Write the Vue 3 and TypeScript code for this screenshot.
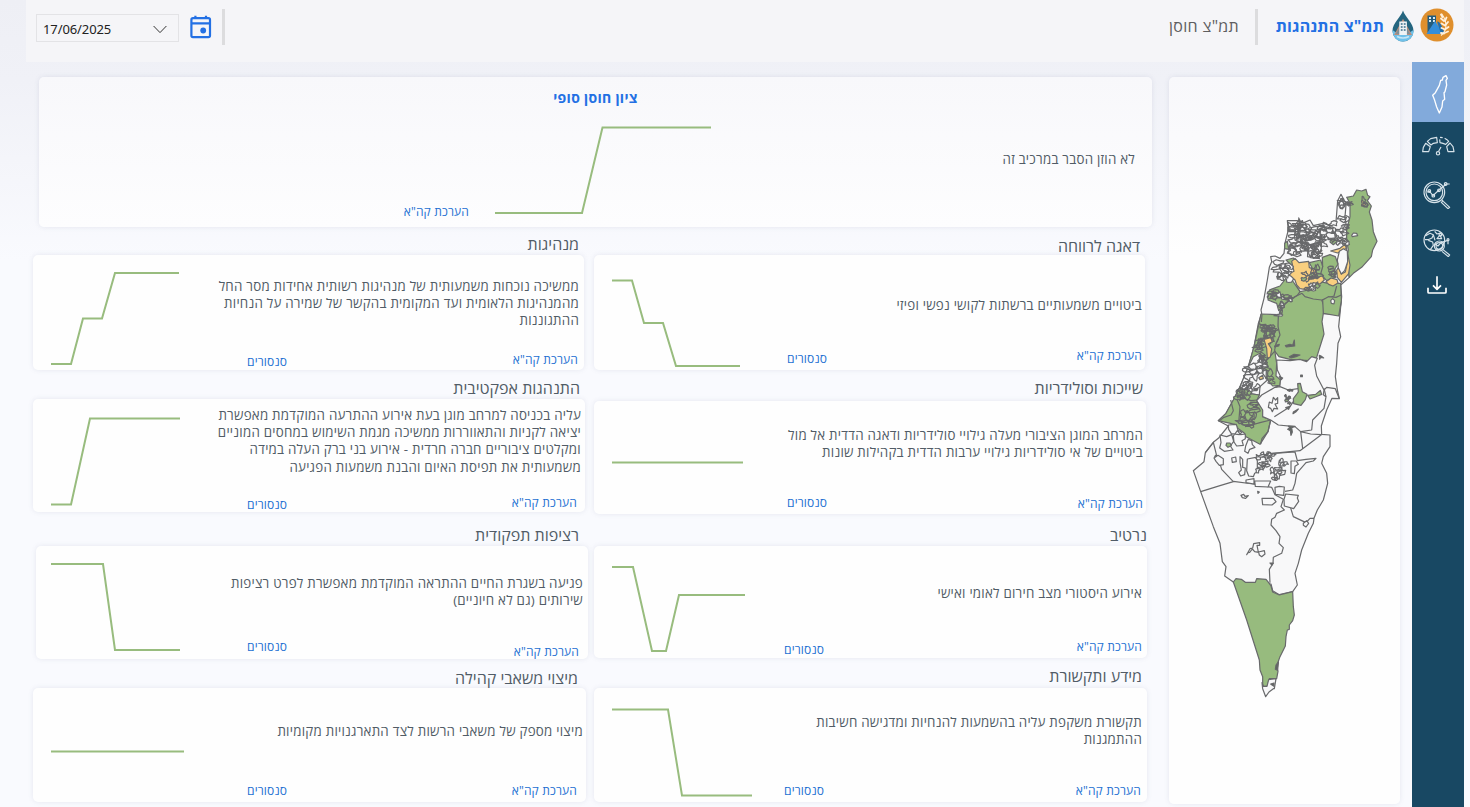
<script setup lang="ts">
interface Panel {
  id: string
  title: string
  lines: string[]
  chart: string
}

const left: Panel[] = [
  {
    id: 'leadership',
    title: 'מנהיגות',
    lines: [
      'ממשיכה נוכחות משמעותית של מנהיגות רשותית אחידות מסר החל',
      'מהמנהיגות הלאומית ועד המקומית בהקשר של שמירה על הנחיות',
      'ההתגוננות',
    ],
    chart: '18,109 38,109 50,63.5 69,63.5 82,18 146,18',
  },
  {
    id: 'behavior',
    title: 'התנהגות אפקטיבית',
    lines: [
      'עליה בכניסה למרחב מוגן בעת אירוע ההתרעה המוקדמת מאפשרת',
      'יציאה לקניות והתאווררות ממשיכה מגמת השימוש במחסים המוניים',
      'ומקלטים ציבוריים חברה חרדית - אירוע בני ברק העלה במידה',
      'משמעותית את תפיסת האיום והבנת משמעות הפגיעה',
    ],
    chart: '18,105.5 38,105.5 57,19.5 147,19.5',
  },
  {
    id: 'continuity',
    title: 'רציפות תפקודית',
    lines: ['פגיעה בשגרת החיים ההתראה המוקדמת מאפשרת לפרט רציפות', 'שירותים (גם לא חיוניים)'],
    chart: '15,18 67,18 79,104 144,104',
  },
  {
    id: 'resources',
    title: 'מיצוי משאבי קהילה',
    lines: ['מיצוי מספק של משאבי הרשות לצד התארגנויות מקומיות'],
    chart: '18,63.5 151,63.5',
  },
]

const right: Panel[] = [
  {
    id: 'welfare',
    title: 'דאגה לרווחה',
    lines: ['ביטויים משמעותיים ברשתות לקושי נפשי ופיזי'],
    chart: '18,25.5 38,25.5 50,68 69,68 82,111 146,111',
  },
  {
    id: 'belonging',
    title: 'שייכות וסולידריות',
    lines: [
      'המרחב המוגן הציבורי מעלה גילויי סולידריות ודאגה הדדית אל מול',
      'ביטויים של אי סולידריות גילויי ערבות הדדית בקהילות שונות',
    ],
    chart: '18,61.5 149,61.5',
  },
  {
    id: 'narrative',
    title: 'נרטיב',
    lines: ['אירוע היסטורי מצב חירום לאומי ואישי'],
    chart: '18,21 39,21 58,105 72,105 85,49 151,49',
  },
  {
    id: 'media',
    title: 'מידע ותקשורת',
    lines: ['תקשורת משקפת עליה בהשמעות להנחיות ומדגישה חשיבות', 'ההתמגנות'],
    chart: '18,21.5 74,21.5 88,107.5 158,107.5',
  },
]

const columns = [left, right]

/* Small municipal areas: centre x, centre y, spread x, spread y, count, size, fill classes */
type Cluster = [number, number, number, number, number, number, string[]]

const clusters: Cluster[] = [
  [350, 165, 26, 34, 16, 13, ['w', 'l', 'l']],
  [398, 178, 36, 40, 30, 14, ['w', 'l', 'l']],
  [450, 165, 26, 34, 13, 11, ['w', 'l', 'l']],
  [372, 212, 46, 16, 20, 13, ['w', 'l']],
  [488, 150, 12, 46, 13, 9, ['w', 'l']],
  [484, 70, 5, 10, 4, 10, ['w', 'l']],
  [505, 68, 7, 6, 3, 7, ['l']],
  [550, 68, 6, 9, 4, 8, ['l', 'y', 'g']],
  [308, 272, 18, 26, 12, 13, ['w', 'l', 'w']],
  [395, 280, 28, 18, 12, 8, ['l', 'g', 'l']],
  [395, 322, 18, 8, 7, 8, ['w', 'l']],
  [452, 280, 16, 20, 5, 8, ['l']],
  [276, 342, 14, 16, 7, 8, ['l', 'g']],
  [312, 352, 28, 8, 11, 7, ['w', 'l', 'g']],
  [300, 392, 6, 24, 5, 7, ['l', 'w']],
  [272, 462, 18, 24, 18, 9, ['g', 'l', 'l']],
  [240, 500, 10, 16, 6, 9, ['g', 'l']],
  [242, 545, 14, 22, 12, 9, ['w', 'l']],
  [216, 575, 16, 28, 8, 12, ['w', 'l']],
  [214, 620, 22, 12, 10, 9, ['w', 'l']],
  [190, 640, 16, 18, 9, 9, ['g', 'l']],
  [272, 590, 10, 24, 4, 9, ['g', 'l']],
  [205, 705, 20, 34, 15, 11, ['l', 'g', 'l']],
  [245, 848, 14, 24, 11, 8, ['w', 'l']],
  [268, 828, 14, 8, 6, 6, ['w', 'l']],
  [310, 850, 10, 8, 4, 7, ['w']],
  [282, 880, 20, 18, 6, 8, ['w', 'l']],
  [324, 648, 8, 26, 7, 4, ['g', 'k']],
]

function noise(n: number): number {
  const v = Math.sin(n * 127.1 + 11.7) * 43758.5453
  return v - Math.floor(v)
}

const areas = clusters.flatMap(([cx, cy, sx, sy, count, size, fills], c) =>
  Array.from({ length: count }, (_, i) => {
    const seed = c * 997 + i * 31
    const x = cx + (noise(seed) * 2 - 1) * sx
    const y = cy + (noise(seed + 1) * 2 - 1) * sy
    const wide = 0.7 + noise(seed + 20) * 0.9
    const points = Array.from({ length: 9 }, (_, k) => {
      const a = (k / 9) * Math.PI * 2
      const r = size * (0.3 + noise(seed + 2 + k) * 1.05)
      return `${(x + Math.cos(a) * r * wide).toFixed(1)},${(y + (Math.sin(a) * r) / wide).toFixed(1)}`
    }).join(' ')
    return { points, fill: fills[i % fills.length] }
  }),
)
</script>

<template>
  <div class="app">
    <header class="topbar">
      <div class="datebox">
        <span class="date">17/06/2025</span>
        <svg class="chev" viewBox="0 0 14 9"><path d="M.6 1 7 7.6 13.4 1" /></svg>
      </div>
      <svg class="cal" viewBox="0 0 22 24">
        <rect x="1.4" y="3.2" width="18.6" height="19" rx="1.6" />
        <path d="M1 8.3h19M5.4 .8v3M16 .8v3" />
        <circle cx="13.2" cy="15.5" r="2.9" />
      </svg>
      <i class="divider first"></i>
      <span class="tab" dir="rtl">תמ"צ חוסן</span>
      <i class="divider second"></i>
      <span class="tab active" dir="rtl">תמ"צ התנהגות</span>
      <svg class="drop" viewBox="0 0 22 32">
        <path d="M11 .5C13 7 21.5 13 21.5 21a10.500 10.500 0 0 1-21 0C.5 13 9 7 11 .5Z" fill="#24657f" />
        <path d="M.6 20c6 5 14 5 20.800 0 .8 7-5 11.500-10.400 11.500S.4 27 .6 20Z" fill="#6fc1ea" />
        <path d="M3 24.500 11 10l8 14.500Z" fill="#7d8f97" stroke="#b98e7c" stroke-width="1.200" />
        <path d="M7.300 11.500h7.600V25H7.300z" fill="#eef3f5" />
        <path d="M8.800 14h1.800m1.200 0h1.800M8.800 17h1.800m1.200 0h1.800M8.800 20h1.800m1.200 0h1.800" stroke="#376d88" stroke-width="1.500" />
        <path d="M5 26.500c4 2 8 2 12 0" stroke="#c5e5f5" stroke-width="1.600" />
      </svg>
      <svg class="badge" viewBox="0 0 34 34">
        <circle cx="17" cy="17" r="16.500" fill="#df8f2d" />
        <path d="M7.500 7.500h8.500v17h-8.500z" fill="#245c7c" />
        <path d="M9 10h2m2 0h2M9 13h2m2 0h2" stroke="#d9e9f1" stroke-width="1.800" />
        <path d="m6.500 26 8.500-13 8.500 13Z" fill="#338edb" />
        <path d="M17 13.500c4 0 5 6 8 12.500h-4z" fill="#216fae" />
        <path d="M21 27.500c6-5 7-13 .5-22" stroke="#fff0dc" stroke-width="1.100" />
        <path d="m22.500 9-1.500-2.500m3 6.500-3-2.500m4 7-3.500-2m3.500 6-3.500-1.500m2.500 5.500-3-.5m4-12 1.500-3.500m-1 7.500 2.500-3m-2.500 7 3-2m-4 6 3.500-1.500" stroke="#fff0dc" stroke-width="1.900" stroke-linecap="round" />
      </svg>
    </header>

    <main class="body">
      <div class="content">
        <section class="hero">
          <h1 dir="rtl">ציון חוסן סופי</h1>
          <div class="hero-row">
            <a class="link" dir="rtl">הערכת קה"א</a>
            <svg class="hero-chart" viewBox="0 0 220 90"><polyline points="0,87 87,87 107.500,1.500 216,1.500" /></svg>
            <p dir="rtl">לא הוזן הסבר במרכיב זה</p>
          </div>
        </section>
        <div class="columns">
          <div v-for="(column, c) in columns" :key="c" class="column">
            <section v-for="panel in column" :key="panel.id" class="panel" :class="panel.id">
              <h2 dir="rtl">{{ panel.title }}</h2>
              <div class="card">
                <svg class="chart" viewBox="0 0 180 112"><polyline :points="panel.chart" /></svg>
                <div class="desc" dir="rtl">
                  <span v-for="line in panel.lines" :key="line">{{ line }}</span>
                </div>
                <a class="link sensors" dir="rtl">סנסורים</a>
                <a class="link rating" dir="rtl">הערכת קה"א</a>
              </div>
            </section>
          </div>
        </div>
      </div>

      <section class="mapcard">
        <svg class="map" viewBox="0 0 660 1590">
          <path class="w" d="M322 122 325 150 316 185 312 220 300 235 285 228 272 230 275 245 268 262 262 300 252 355 243 390 245 400 235 430 222 500 205 560 180 620 160 660 138 700 115 722 145 738 115 775 100 787 76 818 72 845 40 872 62 935 100 1040 120 1090 127 1145 138 1160 134 1188 160 1206 273 1212 278 1232 298 1244 338 1235 352 1215 345 1180 355 1150 365 1110 385 1060 400 1030 402 1015 412 990 430 960 443 910 440 880 425 850 430 830 450 800 450 765 425 763 424 738 440 690 456 655 478 656 472 630 466 590 470 550 474 490 482 470 476 440 480 400 485 350 482 315 508 292 500 240 500 150 495 110 498 75 492 60 483 43 473 62 470 100 468 125 445 135 430 130 400 137 390 120 372 128 350 122Z" />
          <path class="g" d="M510 70 500 52 520 48 530 30 545 33 558 28 563 46 570 50 562 62 574 78 568 96 576 120 580 155 591 184 578 210 574 230 545 262 520 280 508 292 500 240 505 210 500 180 500 150 510 110Z" />
          <path class="w" d="m515 166 5-7 10 1 3 7-16 3Z" />
          <path class="g" d="m452 172 14-4 6 16-12 10-10-8ZM314 190l8-6 4 24-12-2Z" />
          <path class="y" d="m452 213 28-8 15-12 4 12-14 8-12 6ZM503 222l7 33-4 26-22 26-12-15-2-22 6-8 8 20 12-6 5-24Z" />
          <path class="w" d="M478 214 490 206 502 213 503 245 494 272 484 282 475 264 472 240Z" />
          <path class="g" d="M427 232 450 224 466 230 474 252 463 270 466 292 440 302 420 280 428 260Z" />
          <path class="g" d="M318 240 340 234 350 246 335 256ZM388 248l34-8 6 20-6 22-18-4Z" />
          <path class="g" d="M300 330 320 300 350 320 360 335 385 330 420 305 445 310 482 310 484 360 478 405 430 400 426 425 432 462 410 532 385 542 330 538 297 530 280 508 295 478 292 420 310 370Z" />
          <path class="g" d="M268 330 300 318 322 290 336 300 360 335 352 346 318 368 296 392 290 370 264 360Z" />
          <path class="y" d="M335 244 345 235 357 248 386 244 388 263 405 267 410 285 425 282 433 300 420 312 400 308 385 330 360 326 350 315 345 300 325 283 342 274Z" />
          <path class="y" d="m438 305 15-11 18 5 3 10-15 9-13-5Z" />
          <path class="l" d="M366 340 375 350 400 357 425 360 462 348 470 318M425 360 431 375 431 400M296 392 330 358 366 340" />
          <path class="g" d="M428 360 445 350 468 352 484 345 484 362 476 408 430 400Z" />
          <path class="w" d="m452 362 6-6 6 6-2 10-8-2Z" />
          <path class="g" d="M243 402 295 404 294 440 300 465 288 490 284 510 290 550 288 588 302 600 300 616 278 618 262 598 258 540 205 560 222 500Z" />
          <path class="w" d="M258 545 248 580 262 600 240 620 238 645 205 640 180 620 205 560 220 530 240 520Z" />
          <path class="l" d="M222 500 246 504 262 498M235 430l22 10 6 20-14 18-24 4M246 404l-2 22M258 598l2-58 24-26" />
          <path class="g" d="M180 620 205 640 238 645 230 662 248 685 248 710 272 720 264 755 240 793 198 770 192 758 175 746 165 733 115 722 138 700 160 660Z" />
          <path class="l" d="M152 660 160 692 153 705 132 712 120 721M272 720 240 728 215 735 195 740M180 622l10 30 22 10 20-2M168 650l12 30-4 50" />
          <path class="w" d="M290 540 330 542 360 538 380 545 395 530 412 535 404 556 410 588 432 630 430 644 438 650 432 685 398 720 395 750 362 755 345 740 295 735 272 720 248 710 248 690 230 662 245 645 285 622 300 616 302 590 292 570Z" />
          <path class="l" d="M283 710 330 680 350 650 360 625 325 630 300 620 285 622M432 625 438 650M432 630 440 622 466 626 478 656M272 720 264 755 246 775 242 792M362 755 368 806 360 812 258 822M368 806 424 764 392 762 362 755" />
          <path class="g" d="m340 656 15-20-2-25 8-1 6 25 14 8-5 16-13 17-22-5Z" />
          <path class="g" d="m383 646 24-3 14-12 4 12-12 5-23 9Z" />
          <path class="w" d="m268 666 8 4 4-18 7 8 6-7v17l-8 2 8 15-11-2-5 10-5-10-7-3Z" />
          <path class="k" d="m285 497 13-4-2 5-12 3ZM316 497l14-4 8 3 5-16 1 18-25 3ZM328 530l14-7 18 2-12 5-15 4ZM418 526l5 2 8 6-9-2-3 6ZM298 590l10 4-4 5ZM362 585h5v5h-5ZM340 696l15-9-8 9-8 5ZM325 738l20 1-10 4 2 13-4 10-2-14-8-4 6-4Z" />
          <path class="k" d="m319 655 12-2-6 7ZM317 683l13-4-4 9ZM270 1149h10l-4 6ZM278 1448l6-4M288 1455l7-9-3 25-6-3Z" />
          <path class="l" d="M76 818 100 787 112 835 118 845 125 868 160 905 120 917 62 935M160 904 220 912 275 922 285 944 310 958 303 980 313 990 290 1000 285 1012 275 1018 273 1035 288 1052 300 1070 297 1090 310 1103 305 1120 280 1132 279 1150 268 1168 270 1208M258 822 345 816 352 842 378 838 408 835 400 843 378 848 350 880 345 910 338 930 315 934M332 984 340 1010 378 1028 390 1015 402 1015M112 835l-8-6 6-6" />
          <path class="w" d="m120 765 20 5 15-6 6 20-10 14 8 12-26 4-14-10 4-16ZM160 768l12-16 10 12 14-2v14l-10 6 4 14-20 2-8-12ZM145 735l24-2 5 18 12 5-8 8-24-3-8-13ZM197 798l8-20 10 4 2 12 8 8-16 6-5 12-10-6ZM102 834l12-8 16 10v18l-12 2-10-12ZM155 834l12-3 2 14-12 2ZM180 830l8 8v24l8 2-2 20-12 4-6-10 8-8-4-24Z" />
          <path class="g" d="m140 789 10 0 4 8-10 5-6-6Z" />
          <path class="w" d="m312 958 5-16 38 4-3 8 4 10-15 22-28-8ZM285 922l13-3 15 2-2 25-25-3ZM246 955h34l8 10-12 10-28-1ZM224 903h48l-8 18-38-2ZM282 873l35-2-3 12-30 7ZM198 900l24-4v16l-24-4ZM333 843h16l6 10-10 6-2 22-10-2ZM202 837l25-5 5 10v34l-8 4-4 10-14-2-6-16Z" />
          <path class="w" d="M183 946l8-3 4 6 10-2-8 8-10-2ZM233 934l5 2-4 4ZM370 1030l10-8 6 8-8 11-8-5Z" />
          <path class="w" d="m200 1124 10-18 8-2 3-13 18-3v8h-8l4 20 18-4 2 10-10 8-7-5-2-8-12-2-7-8-8 10-5 1Z" />
          <polygon v-for="(area, i) in areas" :key="i" :class="['area', area.fill]" :points="area.points" />
          <path class="y" d="m252 478 20-5 5 12-12 6 10 16-4 24-9 4-2-30Z" />
          <path class="y" d="m236 593 12-7 2 10-10 3Z" />
          <path class="g" d="M160 1206 168 1196 184 1198 196 1207 226 1207 230 1196 258 1198 266 1208 273 1218 278 1236 298 1245 338 1235 340 1280 343 1305 338 1322 328 1335 328 1348 322 1350 318 1370 316 1398 300 1430 291 1455 294 1474 290 1496 268 1496 262 1518 252 1520 248 1514 248 1490 240 1470 238 1440 200 1320Z" />
          <path class="k" d="M288 1455l7-9-3 25-6-3Z" />
          <path class="w" d="m246 1508 4 11 11 0 5-20 22-3-5 30-3 0-13 10-10 14-9-24Z" />
          <path class="k" d="m272 1512 10-3 0 10-6-4Z" />
        </svg>
      </section>

      <nav class="rail">
        <div class="rail-active">
          <svg class="i-map" viewBox="0 0 60 120"><path d="m45 7 9-5 4 8-4 6 2 14-5 20-3 3 2 20-6 5-2 18-8 18-8-18-6-20-6-15 8-8 12-22 4-15 5-1Z" /></svg>
        </div>
        <svg class="i-gauge" viewBox="0 0 102 60">
          <path d="m5 47 2-13 7-12 14 10-5 15ZM19 16 29 8l18-4 2 16-12 2-7 5ZM57 4l8 1m6 2 7 4 5 5-9 9-8-3-9-2-1-10M87 21l9 11 3 15H81l-4-15ZM60 33l-7 13" /><circle cx="51" cy="52" r="5" />
        </svg>
        <svg class="i-search" viewBox="0 0 84 84">
          <circle cx="34" cy="34" r="31" /><circle cx="34" cy="34" r="25" /><path d="m13 34 6-4 11 14 18-17 22-18h10M56 56l5 5 19 18-5 4-20-19 6-5" /><circle cx="19" cy="30" r="4" /><circle cx="31" cy="44" r="4" /><circle cx="48" cy="28" r="4" /><circle cx="68" cy="9" r="4" />
        </svg>
        <svg class="i-globe" viewBox="0 0 84 84">
          <circle cx="34" cy="34" r="31" /><path d="M8 20 21 13l10 4-4 10-12 5-9 0M16 34l13 5 2 10-9 13M35 7l7 8 10-3M42 29h14l-5-11ZM35 44l10 7 9-10 18-6M75 34v12M60 62l20 16-4 5-19-16M31 17l5 17" /><circle cx="49" cy="51" r="15" /><circle cx="49" cy="51" r="10" /><circle cx="52" cy="17" r="4" /><circle cx="75" cy="32" r="3" />
        </svg>
        <svg class="i-down" viewBox="0 0 60 54"><path d="M30 1v39M18 28l12 12 12-12M3 35v14q0 2 3 2h48q3 0 3-2V35" /></svg>
      </nav>
    </main>
  </div>
</template>

<style>
body {
  background: #f9fafe;
}
</style>

<style scoped>
* {
  box-sizing: border-box;
}
.app {
  width: 1470px;
  height: 807px;
  overflow: hidden;
  background: linear-gradient(#eeeff5 0, #f0f1f7 80px, #f9fafe 260px);
  color: #515c66;
  font-family: 'Open Sans', 'Noto Sans', sans-serif;
}
h1,
h2,
p {
  margin: 0;
  font-weight: 400;
}
svg {
  display: block;
  flex: none;
  fill: none;
}
.topbar {
  display: flex;
  align-items: flex-start;
  width: 1438px;
  height: 62px;
  margin-left: 26px;
  padding-left: 10px;
  background: #f5f5f8;
}
.datebox {
  display: flex;
  align-items: center;
  justify-content: space-between;
  width: 143px;
  height: 28px;
  margin-top: 14px;
  padding: 2px 11px 0 6px;
  border: 1px solid #e3e3e6;
}
.date {
  color: #222;
  font: 13px/20px 'Noto Sans', sans-serif;
  letter-spacing: -0.1px;
}
.chev {
  width: 14px;
  height: 9px;
  stroke: #333;
}
.cal {
  width: 22px;
  height: 24px;
  margin: 15px 0 0 11px;
  stroke: #2370e4;
  stroke-width: 2.2;
}
.cal circle {
  fill: #2370e4;
  stroke: none;
}
.divider {
  width: 3px;
  height: 36px;
  margin-top: 9px;
  background: #dcdcde;
}
.divider.first {
  margin-left: 10px;
}
.divider.second {
  margin-left: 16px;
}
.tab {
  width: 73px;
  margin: 14px 0 0 941px;
  color: #5e5e60;
  font-size: 16px;
  letter-spacing: 0.3px;
  line-height: 25px;
  white-space: nowrap;
}
.tab.active {
  width: 110px;
  margin-left: 16px;
  color: #2370e4;
  font-weight: 700;
  letter-spacing: 0.15px;
}
.drop {
  width: 22px;
  height: 32px;
  margin: 10px 0 0 8px;
}
.badge {
  width: 34px;
  height: 34px;
  margin: 8px 0 0 6px;
}
.body {
  display: flex;
  height: 745px;
}
.content {
  width: 1169px;
  padding-top: 15px;
}
.hero {
  width: 1113px;
  height: 150px;
  margin-left: 39px;
  padding-top: 11px;
}
.hero,
.card,
.mapcard {
  border-radius: 5px;
  background: linear-gradient(#f8f8fb, #fdfdfe);
  box-shadow: 0 0 5px rgba(90, 100, 140, 0.13);
}
.hero h1 {
  height: 20px;
  color: #2370e4;
  font-size: 14px;
  font-weight: 700;
  letter-spacing: 0.3px;
  line-height: 20px;
  text-align: center;
}
.hero-row {
  display: grid;
  grid-template-columns: 430px 26px 220px 420px;
  height: 119px;
}
.hero-row .link {
  margin-top: 95px;
}
.hero-chart {
  grid-column: 3;
  width: 220px;
  height: 90px;
  margin-top: 18px;
}
.hero-row p {
  margin-top: 41px;
  font-size: 13.33px;
  letter-spacing: 0.24px;
  line-height: 20px;
}
polyline {
  stroke: #98bc7e;
  stroke-width: 2;
}
.link {
  color: #2370d2;
  font-size: 12px;
  letter-spacing: 0.16px;
  line-height: 18px;
  white-space: nowrap;
}
.columns {
  display: flex;
  align-items: flex-start;
}
.column {
  width: 594px;
}
.column + .column {
  width: 555px;
}
.panel {
  display: flex;
  flex-direction: column;
  width: var(--w, 552px);
}
.column:first-child .panel {
  margin-left: 33px;
}
.column:first-child .continuity {
  margin-left: 36px;
}
.panel h2 {
  height: var(--head);
  padding-right: var(--tr);
  padding-top: var(--tt);
  font-size: 16px;
  line-height: 22px;
  white-space: nowrap;
}
.card {
  display: grid;
  grid-template-columns: 180px 1fr;
  grid-template-rows: 1fr;
  height: var(--h, 113px);
  background: #fefefe;
}
.chart {
  grid-area: 1 / 1;
  width: 180px;
  height: 112px;
  overflow: visible;
}
.desc {
  grid-area: 1 / 2;
  margin: var(--dt) var(--dr, 4px) 0 0;
  font-size: 13.33px;
  letter-spacing: 0.24px;
  line-height: 17.2px;
  white-space: nowrap;
}
.desc span {
  display: block;
}
.rating {
  grid-area: 1 / 2;
  margin: var(--rt) var(--rr, 7px) 0 0;
}
.sensors {
  grid-area: 1 / 2;
  justify-self: start;
  margin: var(--st) 0 0 var(--sx, 34px);
}
.leadership { --head: 28px; --tt: 6px; --tr: 5px; --h: 115px; --w: 551px; --dt: 23px; --dr: 5px; --rt: 96px; --rr: 6px; --st: 98px; }
.behavior { --head: 29px; --tt: 7px; --tr: 5px; --dt: 8px; --rt: 95px; --rr: 8px; --st: 97px; }
.continuity { --head: 34px; --tt: 12px; --tr: 9px; --dt: 29px; --dr: 5px; --rt: 97px; --rr: 9px; --st: 92px; --sx: 31px; }
.resources { --head: 29px; --tt: 8px; --tr: 8px; --w: 553px; --h: 114px; --dt: 35px; --dr: 3px; --rt: 94px; --rr: 9px; --st: 94px; }
.welfare { --head: 28px; --tt: 8px; --tr: 5px; --h: 115px; --w: 551px; --dt: 42px; --dr: 3px; --rt: 92px; --rr: 3px; --st: 95px; --sx: 13px; }
.belonging { --head: 31px; --tt: 7px; --tr: 3px; --dt: 26px; --dr: 3px; --rt: 94px; --rr: 3px; --st: 93px; --sx: 13px; }
.narrative { --head: 32px; --tt: 10px; --tr: 0px; --w: 553px; --h: 112px; --dt: 39px; --dr: 5px; --rt: 92px; --rr: 5px; --st: 95px; --sx: 10px; }
.media { --head: 30px; --tt: 7px; --tr: 5px; --w: 553px; --h: 114px; --dt: 26px; --dr: 5px; --rt: 94px; --rr: 6px; --st: 94px; --sx: 10px; }
.mapcard {
  width: 231px;
  height: 727px;
  margin-top: 15px;
  padding: 103px 0 0 11px;
  background: linear-gradient(#f8f8fb, #fefefe 180px);
}
.map {
  width: 220px;
  height: 530px;
  stroke: #68696b;
  stroke-width: 3.6;
  stroke-linejoin: round;
}
.w {
  fill: #f8f8f9;
}
.g {
  fill: #97bb7e;
}
.y {
  fill: #f9cf7f;
}
.k {
  fill: #5f6660;
}
.l {
  fill: none;
}
.rail {
  display: flex;
  flex-direction: column;
  align-items: center;
  width: 52px;
  height: 745px;
  margin-left: 12px;
  background: #184863;
}
.rail svg {
  stroke: #d7e3ea;
  stroke-width: 3.5;
  stroke-linejoin: round;
}
.rail-active {
  display: flex;
  justify-content: center;
  width: 52px;
  height: 60px;
  padding-top: 13px;
  background: #82aadb;
}
.rail .i-map {
  width: 20px;
  height: 40px;
  margin-right: 1px;
  stroke: #fff;
  stroke-width: 4;
}
.rail .i-gauge {
  width: 34px;
  height: 20px;
  margin: 14px 1px 0 0;
}
.rail .i-search {
  width: 28px;
  height: 28px;
  margin: 25px 2px 0 0;
}
.rail .i-globe {
  width: 28px;
  height: 28px;
  margin: 20px 2px 0 0;
}
.rail .i-down {
  width: 20px;
  height: 18px;
  margin: 19px 2px 0 0;
  stroke: #fff;
  stroke-width: 5;
}
</style>
